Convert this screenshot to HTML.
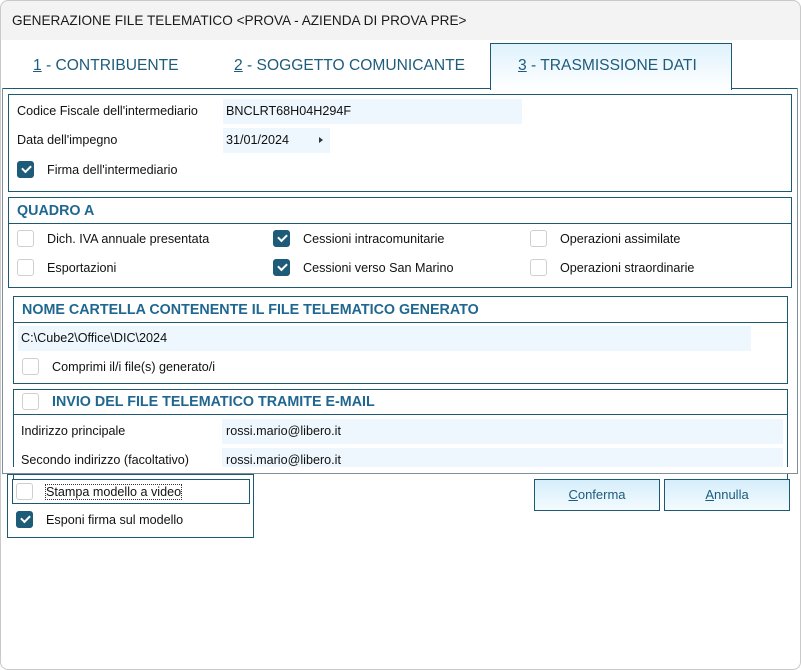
<!DOCTYPE html>
<html><head><meta charset="utf-8"><style>
*{box-sizing:border-box;margin:0;padding:0}
body{width:801px;height:670px;background:#fff;font-family:"Liberation Sans",sans-serif;font-size:12.6px;color:#111;position:relative;overflow:hidden}
.a{position:absolute}
.win{left:0;top:0;width:801px;height:670px;border-radius:8px;overflow:hidden;background:#fff}
.frame{left:0;top:0;width:801px;height:670px;border:1px solid #c9c9c9;border-radius:8px}
.title{left:0;top:0;width:801px;height:40px;background:#f3f3f3;font-size:13.6px;line-height:42px;padding-left:12px;color:#1a1a1a}
.tab{font-size:15.6px;color:#1e5c7c;top:57px}
.box{border:1px solid #1d5a72}
.hdr{font-weight:bold;color:#1f6790;font-size:14.3px}
.inp{background:#eef7fd}
.cb{width:17px;height:17px;border:1px solid #cfcfcf;border-radius:3px;background:#fff}
.cb.on{background:#1d5b78;border-color:#1d5b78}
.cb.on::after{content:"";position:absolute;left:4px;top:3px;width:7px;height:4px;border-left:2px solid #fff;border-bottom:2px solid #fff;transform:rotate(-45deg)}
.btn{border:1px solid #1d5a72;background:linear-gradient(#d5eefb,#f3fbff);text-align:center;line-height:30px;color:#1e5c7c;font-size:13px}
u{text-decoration:underline}
</style></head><body>
<div class="a win">
<div class="a title">GENERAZIONE FILE TELEMATICO &lt;PROVA - AZIENDA DI PROVA PRE&gt;</div>
<div class="a tab" style="left:33px"><u>1</u> - CONTRIBUENTE</div>
<div class="a tab" style="left:234px"><u>2</u> - SOGGETTO COMUNICANTE</div>
<div class="a" style="left:2px;top:88px;width:796px;height:386px;border:1px solid #1d5a72;border-bottom-color:#7f8f99"></div>
<div class="a" style="left:490px;top:43px;width:242px;height:47px;border:1px solid #1d5a72;border-bottom:none;background:linear-gradient(#dff2fc,#fff)"></div>
<div class="a tab" style="left:518px"><u>3</u> - TRASMISSIONE DATI</div>

<div class="a box" style="left:8px;top:94px;width:784px;height:98px"></div>
<div class="a" style="left:17px;top:104px">Codice Fiscale dell'intermediario</div>
<div class="a inp" style="left:223px;top:99px;width:299px;height:25px"></div>
<div class="a" style="left:226px;top:104px">BNCLRT68H04H294F</div>
<div class="a" style="left:17px;top:133px">Data dell'impegno</div>
<div class="a inp" style="left:223px;top:128px;width:107px;height:25px"></div>
<div class="a" style="left:226px;top:133px">31/01/2024</div>
<div class="a" style="left:319px;top:137px;width:0;height:0;border-left:4px solid #333;border-top:3.5px solid transparent;border-bottom:3.5px solid transparent"></div>
<div class="a cb on" style="left:17px;top:161px"></div>
<div class="a" style="left:47px;top:163px">Firma dell'intermediario</div>

<div class="a box" style="left:8px;top:197px;width:784px;height:91px"></div>
<div class="a" style="left:9px;top:223px;width:782px;height:1px;background:#1d5a72"></div>
<div class="a hdr" style="left:17px;top:203px">QUADRO A</div>
<div class="a cb" style="left:17px;top:230px"></div><div class="a" style="left:47px;top:232px">Dich. IVA annuale presentata</div>
<div class="a cb on" style="left:273px;top:230px"></div><div class="a" style="left:303px;top:232px">Cessioni intracomunitarie</div>
<div class="a cb" style="left:530px;top:230px"></div><div class="a" style="left:560px;top:232px">Operazioni assimilate</div>
<div class="a cb" style="left:17px;top:259px"></div><div class="a" style="left:47px;top:261px">Esportazioni</div>
<div class="a cb on" style="left:273px;top:259px"></div><div class="a" style="left:303px;top:261px">Cessioni verso San Marino</div>
<div class="a cb" style="left:530px;top:259px"></div><div class="a" style="left:560px;top:261px">Operazioni straordinarie</div>

<div class="a box" style="left:13px;top:296px;width:775px;height:88px"></div>
<div class="a" style="left:14px;top:322px;width:773px;height:1px;background:#1d5a72"></div>
<div class="a hdr" style="left:22px;top:302px">NOME CARTELLA CONTENENTE IL FILE TELEMATICO GENERATO</div>
<div class="a inp" style="left:18px;top:326px;width:733px;height:25px"></div>
<div class="a" style="left:21px;top:331px">C:\Cube2\Office\DIC\2024</div>
<div class="a cb" style="left:22px;top:358px"></div><div class="a" style="left:52px;top:360px">Comprimi il/i file(s) generato/i</div>

<div class="a box" style="left:13px;top:389px;width:775px;height:90px;border-bottom:none"></div>
<div class="a" style="left:14px;top:414px;width:773px;height:1px;background:#1d5a72"></div>
<div class="a cb" style="left:22px;top:393px"></div>
<div class="a hdr" style="left:52px;top:394px">INVIO DEL FILE TELEMATICO TRAMITE E-MAIL</div>
<div class="a inp" style="left:222px;top:419px;width:561px;height:25px"></div>
<div class="a" style="left:21px;top:424px">Indirizzo principale</div>
<div class="a" style="left:226px;top:424px">rossi.mario@libero.it</div>
<div class="a inp" style="left:222px;top:448px;width:561px;height:20px"></div>
<div class="a" style="left:21px;top:453px">Secondo indirizzo (facoltativo)</div>
<div class="a" style="left:226px;top:453px">rossi.mario@libero.it</div>
<div class="a" style="left:3px;top:467px;width:794px;height:6px;background:#fff"></div>
<div class="a" style="left:2px;top:473px;width:796px;height:1px;background:#7f8f99"></div>
<div class="a" style="left:2px;top:88px;width:1px;height:386px;background:#7f8f99"></div>
<div class="a" style="left:797px;top:88px;width:1px;height:386px;background:#7f8f99"></div>

<div class="a box" style="left:7px;top:474px;width:247px;height:64px"></div>
<div class="a box" style="left:12px;top:479px;width:238px;height:25px"></div>
<div class="a cb" style="left:16px;top:483px"></div>
<div class="a" style="left:46px;top:485px;outline:1px dotted #333">Stampa modello a video</div>
<div class="a cb on" style="left:16px;top:511px"></div>
<div class="a" style="left:46px;top:513px">Esponi firma sul modello</div>

<div class="a btn" style="left:534px;top:479px;width:126px;height:32px"><u>C</u>onferma</div>
<div class="a btn" style="left:664px;top:479px;width:126px;height:32px"><u>A</u>nnulla</div>
</div>
<div class="a frame"></div>
</body></html>
